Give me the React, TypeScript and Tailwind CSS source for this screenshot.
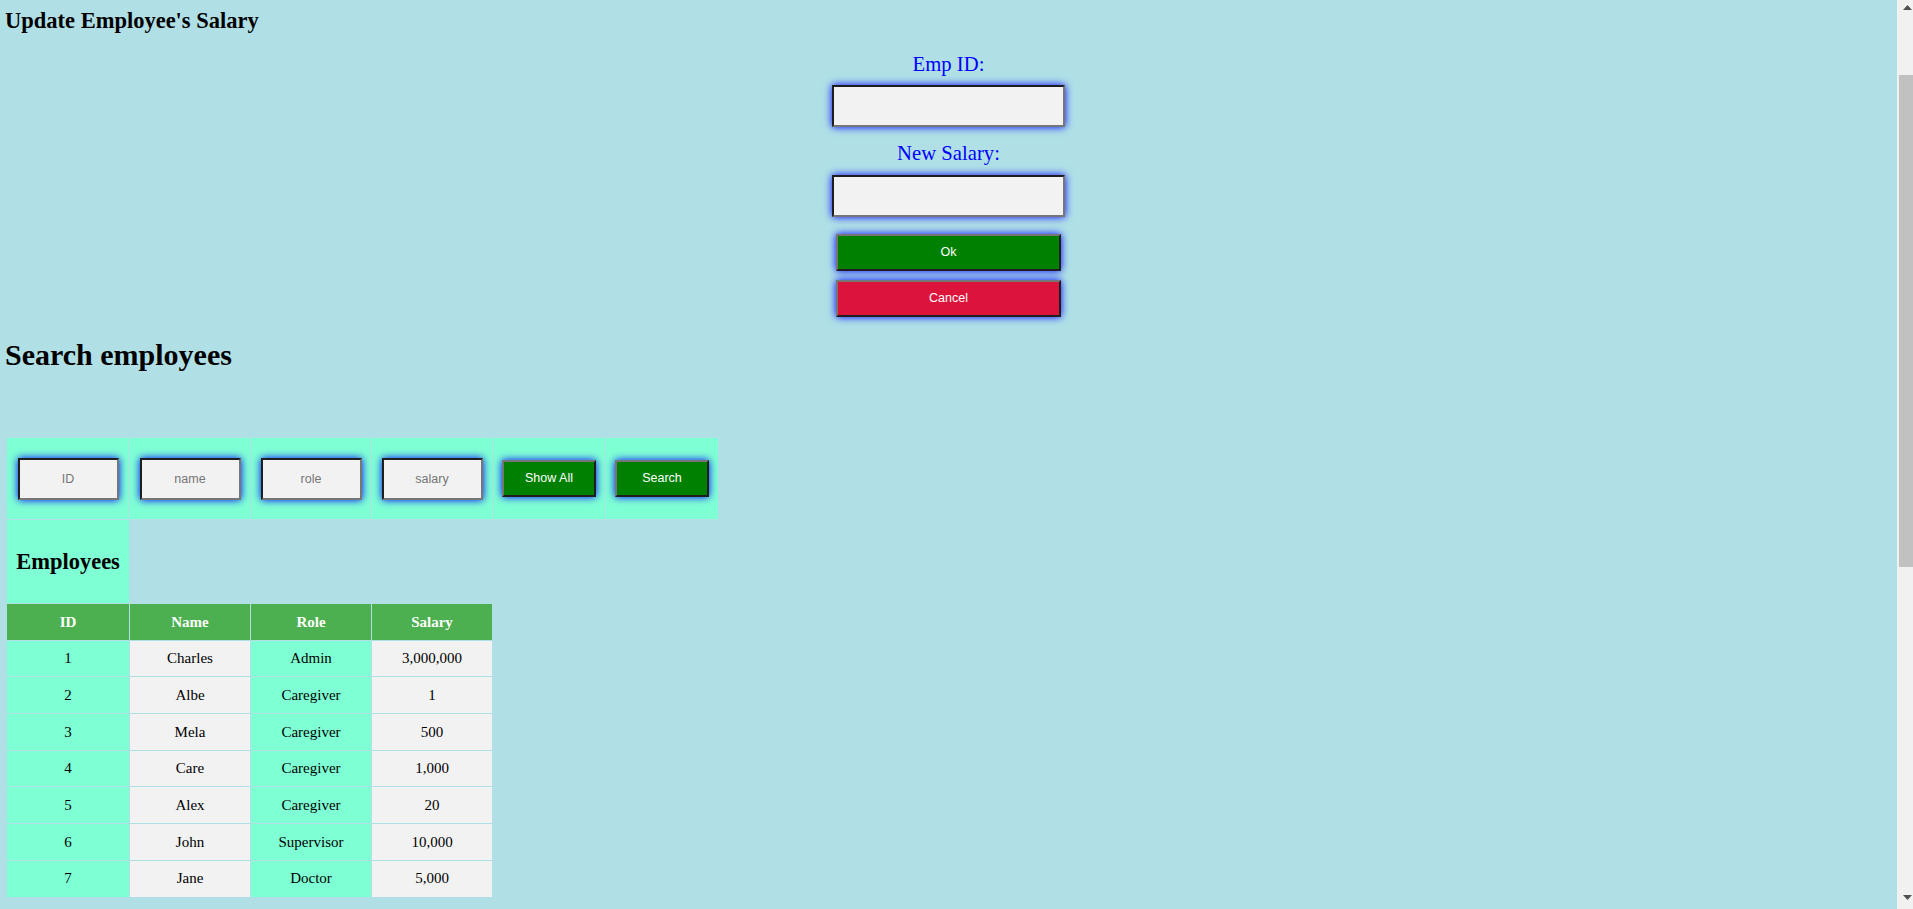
import React from 'react';

type Employee = { id: number; name: string; role: string; salary: string };

const employees: Employee[] = [
    { id: 1, name: 'Charles', role: 'Admin', salary: '3,000,000' },
    { id: 2, name: 'Albe', role: 'Caregiver', salary: '1' },
    { id: 3, name: 'Mela', role: 'Caregiver', salary: '500' },
    { id: 4, name: 'Care', role: 'Caregiver', salary: '1,000' },
    { id: 5, name: 'Alex', role: 'Caregiver', salary: '20' },
    { id: 6, name: 'John', role: 'Supervisor', salary: '10,000' },
    { id: 7, name: 'Jane', role: 'Doctor', salary: '5,000' },
];

const inputCls =
    "bg-[#f2f2f2] border-2 border-t-[#1e1e1e] border-l-[#1e1e1e] border-b-[#767676] border-r-[#767676] shadow-[0_0_8px_#0000ff] outline-none text-center text-[12.5px] font-['Liberation_Sans',Arial,sans-serif] text-black placeholder:text-[#767676]";

const btnCls =
    "border-2 border-t-[#767676] border-l-[#767676] border-b-[#1e1e1e] border-r-[#1e1e1e] shadow-[0_0_8px_#0000ff] text-white text-[12.5px] font-['Liberation_Sans',Arial,sans-serif]";

// classic window scrollbar, drawn since the headless page hides it
const Scrollbar = () => (
    <aside className="w-[16px] h-[909px] shrink-0 bg-[#f1f1f1] flex flex-col">
        <svg width="9" height="5" viewBox="0 0 9 5" className="mt-[5px] ml-[6px]">
            <path d="M4.5 0 L9 5 L0 5 Z" fill="#505050" />
        </svg>
        <div className="mt-[65px] ml-[2px] w-[14px] h-[492px] bg-[#c1c1c1]" />
        <div className="flex-1" />
        <svg width="9" height="5" viewBox="0 0 9 5" className="mb-[9px] ml-[6px]">
            <path d="M0 0 L9 0 L4.5 5 Z" fill="#505050" />
        </svg>
    </aside>
);

export default function App() {
    return (
        <div className="flex items-start bg-[#b0e0e6] font-['Liberation_Serif','Times_New_Roman',serif] text-black">
            <main className="flex-1 min-h-[1615px]">
                {/* Update form */}
                <h3 className="pt-[8px] pl-[5px] text-[22.5px] font-bold leading-[25px]">Update Employee's Salary</h3>

                <div className="flex flex-col items-center">
                    <label className="mt-[20px] text-[20.7px] leading-[23px] text-[#0000ff]">Emp ID:</label>
                    <input className={`mt-[9px] w-[233px] h-[42px] ${inputCls}`} />
                    <label className="mt-[15px] text-[20.7px] leading-[23px] text-[#0000ff]">New Salary:</label>
                    <input className={`mt-[10px] w-[233px] h-[42px] ${inputCls}`} />
                    <button className={`mt-[17px] w-[225px] h-[37px] bg-[#008000] ${btnCls}`}>Ok</button>
                    <button className={`mt-[9px] w-[225px] h-[37px] bg-[#dc143c] ${btnCls}`}>Cancel</button>
                </div>

                {/* Search + list */}
                <h2 className="mt-[20px] pl-[5px] text-[30px] font-bold leading-[35px]">Search employees</h2>

                <table className="mt-[65px] ml-[6px] w-[713px] table-fixed border-separate border-spacing-[1px]">
                    <colgroup>
                        <col className="w-[122px]" />
                        <col className="w-[120px]" />
                        <col className="w-[120px]" />
                        <col className="w-[120px]" />
                        <col className="w-[112px]" />
                        <col className="w-[112px]" />
                    </colgroup>
                    <tbody>
                        <tr>
                            {['ID', 'name', 'role', 'salary'].map(p => (
                                <td key={p} className="h-[81px] p-0 bg-[#7fffd4] text-center align-middle">
                                    <input placeholder={p} className={`w-[101px] h-[42px] ${inputCls}`} />
                                </td>
                            ))}
                            <td className="h-[81px] p-0 bg-[#7fffd4] text-center align-middle">
                                <button className={`w-[94px] h-[37px] bg-[#008000] ${btnCls}`}>Show All</button>
                            </td>
                            <td className="h-[81px] p-0 bg-[#7fffd4] text-center align-middle">
                                <button className={`w-[94px] h-[37px] bg-[#008000] ${btnCls}`}>Search</button>
                            </td>
                        </tr>
                        <tr>
                            <th className="h-[83px] p-0 bg-[#7fffd4] text-[22.5px] font-bold text-center align-middle">Employees</th>
                        </tr>
                        <tr className="text-white text-[15px] font-bold">
                            <th className="h-[35.7px] p-0 bg-[#4caf50]">ID</th>
                            <th className="h-[35.7px] p-0 bg-[#4caf50]">Name</th>
                            <th className="h-[35.7px] p-0 bg-[#4caf50]">Role</th>
                            <th className="h-[35.7px] p-0 bg-[#4caf50]">Salary</th>
                        </tr>
                        {employees.map(e => (
                            <tr key={e.id} className="text-[15px] text-center">
                                <td className="h-[35.7px] p-0 bg-[#7fffd4]">{e.id}</td>
                                <td className="h-[35.7px] p-0 bg-[#f2f2f2]">{e.name}</td>
                                <td className="h-[35.7px] p-0 bg-[#7fffd4]">{e.role}</td>
                                <td className="h-[35.7px] p-0 bg-[#f2f2f2]">{e.salary}</td>
                            </tr>
                        ))}
                    </tbody>
                </table>
            </main>
            <Scrollbar />
        </div>
    );
}
